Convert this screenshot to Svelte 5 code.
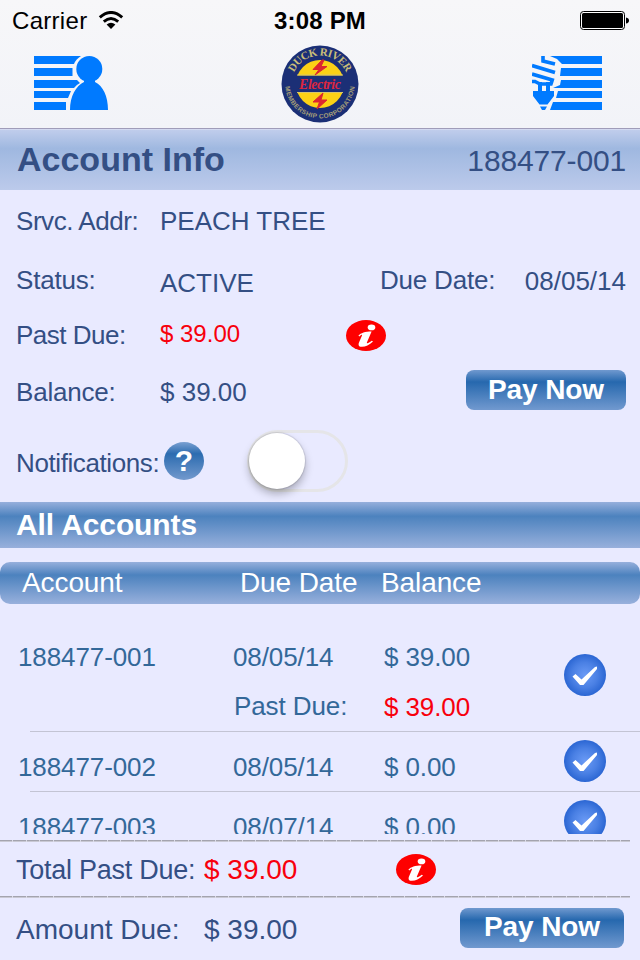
<script>
  let notifications = $state(false);

  const account = {
    number: '188477-001',
    address: 'PEACH TREE',
    status: 'ACTIVE',
    dueDate: '08/05/14',
    pastDue: '$ 39.00',
    balance: '$ 39.00'
  };

  const accounts = [
    { number: '188477-001', dueDate: '08/05/14', balance: '$ 39.00', pastDue: '$ 39.00' },
    { number: '188477-002', dueDate: '08/05/14', balance: '$ 0.00' },
    { number: '188477-003', dueDate: '08/07/14', balance: '$ 0.00' }
  ];
</script>

{#snippet infoIcon()}
  <svg class="info-icon" viewBox="0 0 40 31" width="40" height="31">
    <ellipse cx="20" cy="15.5" rx="20" ry="15.5" fill="#fe0000" />
    <ellipse cx="25.5" cy="7.4" rx="3.8" ry="2.8" fill="#fff" />
    <path d="M12.4 15.6C15 12.8 19 11.4 25.6 11.4L21 22.2C20.2 24.2 22.6 23.4 25.8 20.8L27 21.6C23.2 25.4 19 27 15.4 26.8C12.4 26.6 12.2 24.6 13 22.4L16 15.6C16.4 14.2 15.2 14.6 13.4 16.4Z" fill="#fff" />
  </svg>
{/snippet}

<div class="app">
  <header>
    <div class="status-bar">
      <span class="carrier">Carrier</span>
      <svg class="wifi" viewBox="0 0 26 19" width="26" height="19">
        <path d="M1.8 6.4Q13-3.4 24.2 6.4" fill="none" stroke="#000" stroke-width="3" />
        <path d="M5.8 10.6Q13 4.4 20.2 10.6" fill="none" stroke="#000" stroke-width="2.9" />
        <path d="M8.6 13.6Q13 10 17.4 13.6L13 18Z" fill="#000" />
      </svg>
      <span class="time">3:08 PM</span>
      <svg class="battery" viewBox="0 0 49 19" width="49" height="19">
        <rect x="0.5" y="0.5" width="44" height="18" rx="3" fill="#fff" stroke="#000" />
        <rect x="2" y="2" width="41" height="15" rx="1.5" />
        <path d="M46 6.5Q49 7 49 9.5T46 12.5Z" />
      </svg>
    </div>
    <nav>
      <svg class="nav-icon" viewBox="0 0 74 54" width="74" height="54" fill="#007aff">
        <path d="M0 0H47Q42 3 40 8H0ZM0 12H38.500V20H0ZM0 24H43L46 27Q42 29 40 32H0ZM0 35H37L34 42H0ZM0 46H32V54H0Z" />
        <circle cx="55.300" cy="13" r="13" />
        <path d="M50 22H61V26C69 30 74 40 74 54H36C36 40 42 30 50 26Z" />
      </svg>
      <svg class="logo" viewBox="0 0 78 78" width="78" height="78">
        <defs>
          <path id="arc-top" d="M10.500 39A28.500 28.500 0 0 1 67.500 39" />
          <path id="arc-bottom" d="M4.500 35A34.700 34.700 0 1 0 73.500 35" />
        </defs>
        <circle cx="39" cy="39" r="38.500" fill="#1b2f76" />
        <circle cx="39" cy="39" r="24" fill="#fbd116" />
        <rect x="12" y="30.500" width="54" height="16.500" fill="#1b2f76" />
        <path d="M16 30H62M16 47.500H62" stroke="#d8c66a" stroke-width="1" />
        <path d="M41 15L32 24.500H38L34 30L46 21.500H40L43 15ZM42 48L32 57H38.500L36 64L46 55H40Z" fill="#dc2630" stroke="#dc2630" />
        <text class="logo-top"><textPath href="#arc-top" startOffset="50%" text-anchor="middle" textLength="66">DUCK RIVER</textPath></text>
        <text class="logo-bottom"><textPath href="#arc-bottom" startOffset="50%" text-anchor="middle" textLength="103">MEMBERSHIP CORPORATION</textPath></text>
        <text class="logo-name" x="39" y="43.500" text-anchor="middle" textLength="42">Electric</text>
      </svg>
      <svg class="nav-icon" viewBox="0 0 70 54" width="70" height="54" fill="#007aff">
        <path d="M18 0H70V8H30L25 3ZM29 12H70V20H28ZM29 24H70V32H21L28 29ZM26 35H70V42H24ZM21 46H70V54H18Z" />
        <path d="M11 0V5L23 8M0 9.500L23 16.500M0 18L22 24.500M0 25.500H3L8 28H19L20 25" fill="none" stroke="#007aff" stroke-width="3.600" />
        <path d="M6 26H10V35H14V26H18V35H22V40L15.500 48.500H7.500L1 40V35H6ZM8 50.500H15L13 54H10Z" />
      </svg>
    </nav>
  </header>

  <div class="title-bar">
    <h1>Account Info</h1>
    <span class="number">{account.number}</span>
  </div>

  <section class="details">
    <div class="row address">
      <span class="label">Srvc. Addr:</span>
      <span class="value">{account.address}</span>
    </div>
    <div class="row status">
      <span class="label">Status:</span>
      <span class="value active">{account.status}</span>
      <span class="due-label">Due Date:</span>
      <span class="due-date">{account.dueDate}</span>
    </div>
    <div class="row past-due">
      <span class="label">Past Due:</span>
      <span class="value red">{account.pastDue}</span>
      {@render infoIcon()}
    </div>
    <div class="row balance">
      <span class="label">Balance:</span>
      <span class="value">{account.balance}</span>
      <button class="pay">Pay Now</button>
    </div>
    <div class="row notify">
      <span class="label">Notifications:</span>
      <button class="help">?</button>
      <button
        class="toggle"
        class:on={notifications}
        aria-label="Notifications"
        onclick={() => (notifications = !notifications)}
      >
        <span class="knob"></span>
      </button>
    </div>
  </section>

  <h2>All Accounts</h2>

  <div class="columns">
    <span>Account</span>
    <span>Due Date</span>
    <span>Balance</span>
  </div>

  <ul>
    {#each accounts as item}
      <li class:tall={item.pastDue}>
        <span>{item.number}</span>
        <span>{item.dueDate}</span>
        <span>{item.balance}</span>
        <svg class="check" viewBox="0 0 42 42" width="42" height="42">
          <defs>
            <radialGradient id="ball">
              <stop offset="0" stop-color="#6a9af5" />
              <stop offset="0.6" stop-color="#4a80e4" />
              <stop offset="1" stop-color="#2b66d3" />
            </radialGradient>
          </defs>
          <circle cx="21" cy="21" r="21" fill="url(#ball)" />
          <path d="M8.500 22.500L11.500 20L17.500 25.500L31 13L33 12.500V15L19.500 31H16Z" fill="#fff" />
        </svg>
        {#if item.pastDue}
          <span class="past-label">Past Due:</span>
          <span class="past-value">{item.pastDue}</span>
        {/if}
      </li>
    {/each}
  </ul>

  <footer>
    <div class="rule"></div>
    <div class="total">
      <span class="total-label">Total Past Due:</span>
      <span class="sum red">{account.pastDue}</span>
      {@render infoIcon()}
    </div>
    <div class="rule"></div>
    <div class="total amount">
      <span class="total-label">Amount Due:</span>
      <span class="sum">{account.balance}</span>
      <button class="pay">Pay Now</button>
    </div>
  </footer>
</div>

<style>
  :global(body) {
    margin: 0;
  }

  .app {
    display: flex;
    flex-direction: column;
    width: 640px;
    height: 960px;
    overflow: hidden;
    background: #e9eaff;
    color: #344f84;
    font-family: 'Liberation Sans', Arial, sans-serif;
    font-size: 26px;
    line-height: 30px;
    white-space: nowrap;
  }

  h1,
  h2,
  ul {
    margin: 0;
    padding: 0;
  }

  svg {
    display: block;
    flex: none;
  }

  button {
    border: 0;
    padding: 0;
    font-family: inherit;
    color: #fff;
    cursor: pointer;
  }

  .red {
    color: #f8000c;
  }

  /* Header */
  header {
    height: 128px;
    border-bottom: 1px solid #a09cb9;
    background: linear-gradient(#f7f7f9, #f2f3f8);
  }

  .status-bar {
    display: grid;
    grid-template-columns: 86px 128px 188px 1fr;
    align-items: center;
    height: 41px;
    padding: 0 11px 0 12px;
    color: #000;
    font-size: 24px;
  }

  .carrier {
    letter-spacing: 0.3px;
  }

  .wifi {
    margin-top: -1px;
  }

  .time {
    justify-self: center;
    font-weight: bold;
    letter-spacing: 0.2px;
  }

  .battery {
    justify-self: end;
  }

  nav {
    display: flex;
    justify-content: space-between;
    padding: 4px 38px 0 34px;
  }

  .nav-icon {
    margin-top: 11px;
  }

  .logo-top {
    fill: #c9bd78;
    font: bold 11px 'Liberation Serif', serif;
  }

  .logo-bottom {
    fill: #a69f78;
    font: bold 6.5px 'Liberation Sans', sans-serif;
  }

  .logo-name {
    fill: #dc2640;
    font: italic bold 14px 'Liberation Serif', serif;
  }

  /* Bars */
  .title-bar {
    display: flex;
    justify-content: space-between;
    align-items: center;
    height: 60px;
    border-top: 1px solid #d3d9f1;
    padding: 0 14px 0 17px;
    background: linear-gradient(#c0cdec, #9fb8e0 31%, #bccaeb);
    font-size: 30px;
  }

  h1 {
    padding-bottom: 3px;
    font-size: 34px;
  }

  .number {
    padding-top: 2px;
    letter-spacing: -0.15px;
  }

  h2 {
    height: 46px;
    padding-left: 16px;
    background: linear-gradient(#96afdc, #4c82be 31%, #98b0dc);
    color: #fff;
    font-size: 30px;
    letter-spacing: -0.1px;
    line-height: 46px;
  }

  .columns {
    display: grid;
    grid-template-columns: 218px 141px 1fr;
    height: 42px;
    margin-top: 14px;
    padding-left: 22px;
    border-radius: 10px;
    background: linear-gradient(#96afdc, #4c82be 31%, #98b0dc);
    color: #fff;
    font-size: 28px;
    letter-spacing: -0.1px;
    line-height: 41px;
  }

  .pay {
    width: 160px;
    height: 40px;
    padding-bottom: 1px;
    border-radius: 8px;
    background: linear-gradient(#7099cf, #2668ae 30%, #7199cf);
    font-size: 28px;
    font-weight: bold;
    letter-spacing: -0.1px;
  }

  /* Details */
  .details {
    height: 312px;
  }

  .row {
    display: flex;
    align-items: center;
    padding: 0 14px 0 16px;
  }

  .label {
    width: 144px;
    letter-spacing: -0.2px;
  }

  .address {
    height: 62px;
  }

  .address .label {
    letter-spacing: -0.45px;
  }

  .status {
    height: 58px;
    align-items: flex-start;
    box-sizing: border-box;
    padding-top: 13px;
  }

  .active {
    width: 220px;
    padding-top: 3px;
  }

  .due-label {
    letter-spacing: -0.2px;
  }

  .due-date {
    margin-left: auto;
    padding-top: 1px;
  }

  .past-due {
    height: 50px;
  }

  .past-due .label {
    letter-spacing: -0.5px;
  }

  .past-due .value {
    width: 186px;
    padding-bottom: 2px;
    font-size: 24px;
  }

  .balance {
    height: 64px;
  }

  .balance .pay {
    margin: 0 0 4px auto;
  }

  .notify {
    height: 78px;
  }

  .notify .label {
    width: 148px;
    letter-spacing: -0.4px;
  }

  .help {
    width: 40px;
    height: 38px;
    margin-bottom: 4px;
    border-radius: 50%;
    background: linear-gradient(#7aa0d2, #2c6cb0 31%, #7399cd);
    font-size: 30px;
    font-weight: bold;
    line-height: 36px;
  }

  .toggle {
    display: flex;
    box-sizing: border-box;
    width: 101px;
    height: 62px;
    margin: 0 0 4px 43px;
    border: 3px solid #e5e5e8;
    border-radius: 31px;
    background: transparent;
  }

  .toggle.on {
    justify-content: flex-end;
    background: #4cd964;
  }

  .knob {
    width: 56px;
    height: 56px;
    margin-left: -1px;
    border-radius: 50%;
    background: #fff;
    box-shadow: 0 0 1px 1px rgba(0, 0, 0, 0.1), 0 5px 9px rgba(0, 0, 0, 0.28);
  }

  /* Accounts list */
  ul {
    height: 230px;
    overflow: hidden;
    list-style: none;
    color: #336899;
    letter-spacing: -0.1px;
  }

  li {
    display: grid;
    grid-template-columns: 215px 151px 180px 42px;
    align-content: start;
    box-sizing: border-box;
    height: 60px;
    padding: 20px 0 0 18px;
    background: linear-gradient(#c3c4d4, #c3c4d4) 30px 100% / 610px 1px no-repeat;
  }

  li.tall {
    height: 128px;
    padding-top: 38px;
    row-gap: 19px;
  }

  .check {
    margin: -12px 0 -30px;
  }

  .tall .check {
    margin-top: 12px;
  }

  .past-label {
    grid-column: 2;
    padding-left: 1px;
  }

  .past-value {
    padding-top: 1px;
    color: #f8000c;
  }

  /* Totals */
  footer {
    padding-top: 6px;
  }

  .rule {
    width: 630px;
    height: 2px;
    background:
      repeating-linear-gradient(90deg, transparent 0 12.5px, #dcdce8 12.5px 13.5px),
      linear-gradient(#a4a4ae 50%, #c9c9d4 50%);
  }

  .total {
    display: flex;
    align-items: center;
    height: 54px;
    padding: 0 16px;
  }

  .total-label,
  .sum {
    padding-top: 2px;
  }

  .total-label {
    width: 188px;
    font-size: 27px;
    letter-spacing: -0.25px;
  }

  .sum {
    width: 192px;
    font-size: 28px;
  }

  .amount {
    height: 62px;
  }

  .amount .total-label {
    font-size: 28px;
    letter-spacing: 0;
  }

  .amount .pay {
    width: 164px;
    margin: 0 0 3px auto;
  }
</style>
